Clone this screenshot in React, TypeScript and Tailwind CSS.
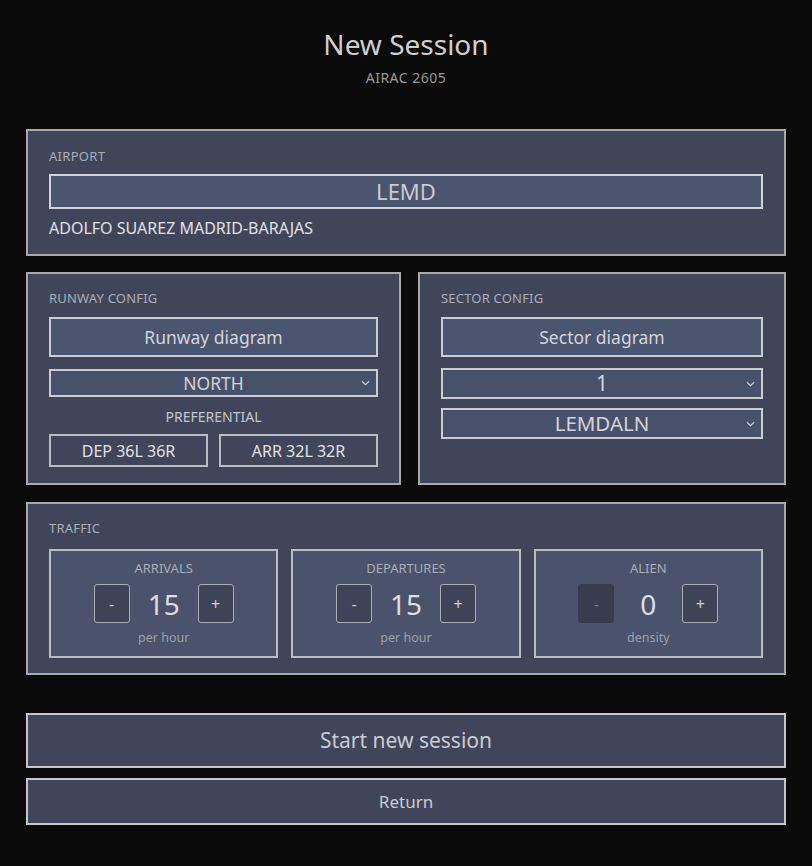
import React from "react";

const font = { fontFamily: '"Noto Sans", "Open Sans", sans-serif' };

function Chevron() {
  return (
    <svg width="9" height="6" viewBox="0 0 9 6" className="absolute right-[6px] top-1/2 -translate-y-1/2">
      <path d="M1 1.2 L4.5 4.6 L8 1.2" fill="none" stroke="#c9ccd4" strokeWidth="1.2" />
    </svg>
  );
}

function Select({ value, h }: { value: string; h: string }) {
  return (
    <div className={`relative flex items-center justify-center border-2 border-[#c9ccd3] bg-[#48516a] text-[#d2d4da] ${h}`}>
      <span>{value}</span>
      <Chevron />
    </div>
  );
}

function Stepper({ label, value, unit, minusDisabled }: { label: string; value: string; unit: string; minusDisabled?: boolean }) {
  return (
    <div className="flex h-[109px] flex-col items-center border-2 border-[#b9bcc3] bg-[#4a536b] pt-[8px]">
      <div className="text-[13px] leading-[18px] text-[#a9adb8]">{label}</div>
      <div className="mt-[7px] flex items-center">
        <div
          className={`flex h-[39px] w-[36px] items-center justify-center rounded-[3px] text-[16px] ${
            minusDisabled ? "bg-[#383d4e] text-[#747a8a]" : "border border-[#a9adb7] bg-[#3e4458] text-[#cdd0d6]"
          }`}
        >
          -
        </div>
        <div className="w-[68px] text-center text-[28px] leading-[38px] text-[#dcdee3]">{value}</div>
        <div className="flex h-[39px] w-[36px] items-center justify-center rounded-[3px] border border-[#a9adb7] bg-[#3e4458] text-[16px] text-[#cdd0d6]">
          +
        </div>
      </div>
      <div className="mt-[6px] text-[12.5px] leading-[18px] text-[#9ca1ad]">{unit}</div>
    </div>
  );
}

export default function App() {
  return (
    <div style={font} className="min-h-[866px] w-full bg-[#0a0a0a] px-[26px] pt-[25px]">
      <div className="text-center text-[28px] leading-[38px] text-[#cfcfcf]">New Session</div>
      <div className="mt-[6px] text-center text-[14px] leading-[18px] tracking-[0.5px] text-[#9a9a9a]">AIRAC 2605</div>

      <div className="mt-[42px] border-2 border-[#a9a9ad] bg-[#40455a] px-[21px] pt-[16px] pb-[16px]">
        <div className="text-[13px] leading-[18px] tracking-[0.3px] text-[#a9adb8]">AIRPORT</div>
        <div className="mt-[9px] flex h-[35px] items-center justify-center border-2 border-[#d0d3da] bg-[#4a5570] text-[22px] text-[#c9ccd3]">
          LEMD
        </div>
        <div className="mt-[9px] text-[16px] leading-[20px] text-[#e0e1e5]">ADOLFO SUAREZ MADRID-BARAJAS</div>
      </div>

      <div className="mt-[16px] flex gap-[17px]">
        <div className="w-[375px] border-2 border-[#a9a9ad] bg-[#40455a] px-[21px] pt-[15px] pb-[16px]">
          <div className="text-[13px] leading-[18px] tracking-[0.2px] text-[#a9adb8]">RUNWAY CONFIG</div>
          <div className="mt-[10px] flex h-[40px] items-center justify-center border-2 border-[#c9ccd3] bg-[#4a5570] text-[17.5px] text-[#d2d4da]">
            Runway diagram
          </div>
          <div className="mt-[12px]">
            <Select value="NORTH" h="h-[28px] text-[17.5px]" />
          </div>
          <div className="mt-[10px] text-center text-[14px] leading-[19px] text-[#c3c6ce]">PREFERENTIAL</div>
          <div className="mt-[8px] grid grid-cols-2 gap-[11px]">
            <div className="flex h-[33px] items-center justify-center border-2 border-[#b9bcc3] bg-[#40455a] text-[16px] text-[#e0e1e5]">
              DEP 36L 36R
            </div>
            <div className="flex h-[33px] items-center justify-center border-2 border-[#b9bcc3] bg-[#40455a] text-[16px] text-[#e0e1e5]">
              ARR 32L 32R
            </div>
          </div>
        </div>
        <div className="flex-1 border-2 border-[#a9a9ad] bg-[#40455a] px-[21px] pt-[15px] pb-[14px]">
          <div className="text-[13px] leading-[18px] tracking-[0.2px] text-[#a9adb8]">SECTOR CONFIG</div>
          <div className="mt-[10px] flex h-[40px] items-center justify-center border-2 border-[#c9ccd3] bg-[#4a5570] text-[17.5px] text-[#d2d4da]">
            Sector diagram
          </div>
          <div className="mt-[11px]">
            <Select value="1" h="h-[31px] text-[21px]" />
          </div>
          <div className="mt-[9px]">
            <Select value="LEMDALN" h="h-[31px] text-[20.5px]" />
          </div>
        </div>
      </div>

      <div className="mt-[17px] border-2 border-[#a9a9ad] bg-[#40455a] px-[21px] pt-[15px] pb-[15px]">
        <div className="text-[13px] leading-[18px] tracking-[0.2px] text-[#a9adb8]">TRAFFIC</div>
        <div className="mt-[12px] grid grid-cols-3 gap-[13px]">
          <Stepper label="ARRIVALS" value="15" unit="per hour" />
          <Stepper label="DEPARTURES" value="15" unit="per hour" />
          <Stepper label="ALIEN" value="0" unit="density" minusDisabled />
        </div>
      </div>

      <div className="mt-[38px] flex h-[55px] items-center justify-center border-2 border-[#c4c6cb] bg-[#40455a] text-[21px] text-[#c9ccd3]">
        Start new session
      </div>
      <div className="mt-[10px] flex h-[47px] items-center justify-center border-2 border-[#c4c6cb] bg-[#40455a] text-[17px] text-[#c9ccd3]">
        Return
      </div>
    </div>
  );
}
